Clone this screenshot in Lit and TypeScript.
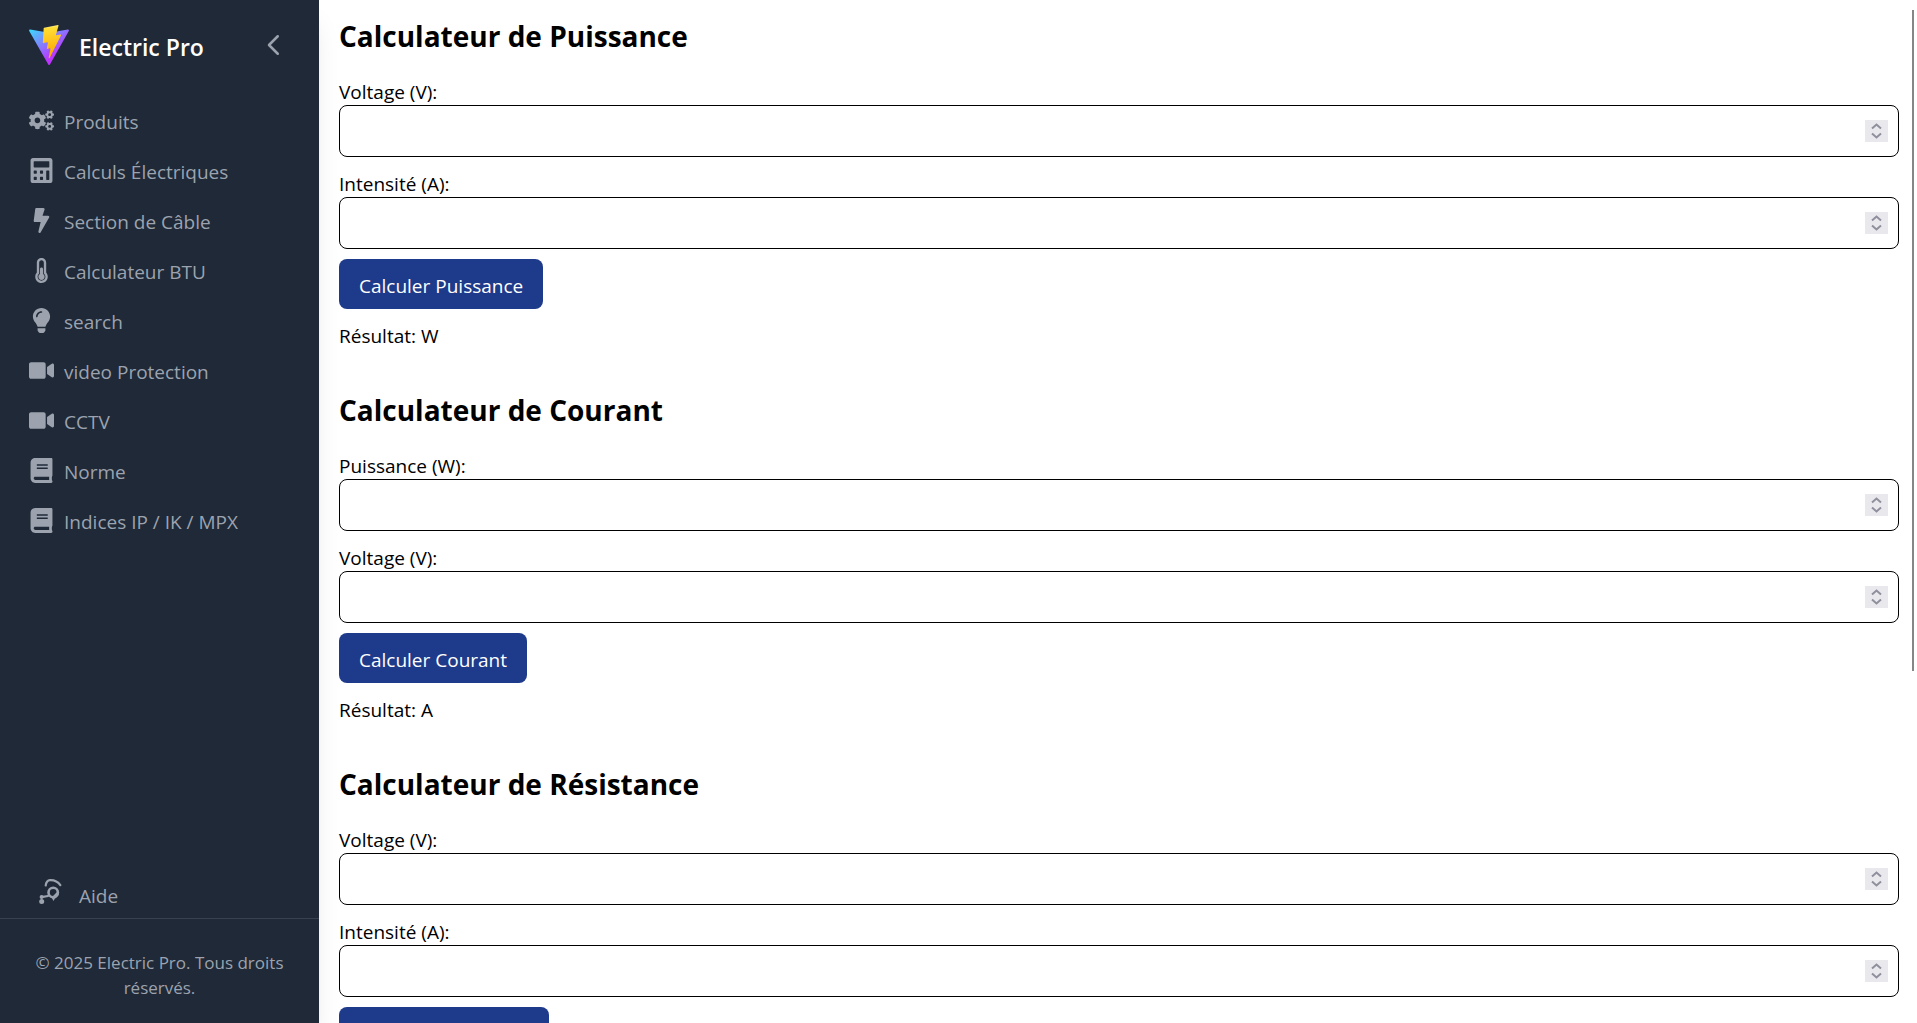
import { LitElement, html, css, svg } from "lit";
import { customElement, property } from "lit/decorators.js";

const COG_SMALL =
  "M512.1 191l-8.2 14.3c-3 5.3-9.4 7.5-15.1 5.4-11.8-4.4-22.6-10.7-32.1-18.6-4.6-3.8-5.8-10.5-2.8-15.7l8.2-14.3c-6.9-8-12.3-17.3-15.9-27.4h-16.5c-6 0-11.2-4.3-12.2-10.3-2-12-2.1-24.6 0-37.1 1-6 6.2-10.4 12.2-10.4h16.5c3.6-10.1 9-19.4 15.9-27.4l-8.2-14.3c-3-5.2-1.9-11.9 2.8-15.7 9.5-7.9 20.4-14.2 32.1-18.6 5.7-2.1 12.1.1 15.1 5.4l8.2 14.3c10.5-1.9 21.2-1.9 31.7 0L552 6.3c3-5.3 9.4-7.5 15.1-5.4 11.8 4.4 22.6 10.7 32.1 18.6 4.6 3.8 5.8 10.5 2.8 15.7l-8.2 14.3c6.9 8 12.3 17.3 15.9 27.4h16.5c6 0 11.2 4.3 12.2 10.3 2 12 2.1 24.6 0 37.1-1 6-6.2 10.4-12.2 10.4h-16.5c-3.6 10.1-9 19.4-15.9 27.4l8.2 14.3c3 5.2 1.9 11.9-2.8 15.7-9.5 7.9-20.4 14.2-32.1 18.6-5.7 2.1-12.1-.1-15.1-5.4l-8.2-14.3c-10.4 1.9-21.2 1.9-31.7 0zm-10.5-58.8c38.5 29.6 82.4-14.3 52.8-52.8-38.5-29.7-82.4 14.3-52.8 52.8z";

const ICONS: Record<string, { box: string; shape: unknown }> = {
  cogs: {
    box: "0 0 640 512",
    shape: svg`<path d=${COG_SMALL}></path><path transform="translate(0 301)" d=${COG_SMALL}></path>
      <path d="M386.3 286.1l33.7 16.8c10.1 5.8 14.5 18.1 10.5 29.1-8.9 24.2-26.4 46.4-42.6 65.8-7.4 8.9-20.2 11.1-30.3 5.3l-29.1-16.8c-16 13.7-34.6 24.6-54.9 31.7v33.6c0 11.6-8.3 21.6-19.7 23.6-24.6 4.2-50.4 4.4-75.9 0-11.5-2-20-11.9-20-23.6V418c-20.3-7.2-38.9-18-54.9-31.7L74 403c-10 5.8-22.9 3.6-30.3-5.3-16.2-19.4-33.3-41.6-42.2-65.7-4-10.9.4-23.2 10.5-29.1l33.3-16.8c-3.9-20.9-3.9-42.4 0-63.4L12 205.8c-10.1-5.8-14.6-18.1-10.5-29 8.9-24.2 26-46.4 42.2-65.8 7.4-8.9 20.2-11.1 30.3-5.3l29.1 16.8c16-13.7 34.6-24.6 54.9-31.7V57.1c0-11.5 8.2-21.5 19.6-23.5 24.6-4.2 50.5-4.4 76-.1 11.5 2 20 11.9 20 23.6v33.6c20.3 7.2 38.9 18 54.9 31.7l29.1-16.8c10-5.8 22.9-3.6 30.3 5.3 16.2 19.4 33.2 41.6 42.1 65.8 4 10.9.1 23.2-10 29.1l-33.7 16.8c3.9 21 3.9 42.5 0 63.5zm-117.6 21.1c59.2-77-28.7-164.9-105.7-105.7-59.2 77 28.7 164.9 105.7 105.7z"></path>`,
  },
  calculator: {
    box: "0 0 448 512",
    shape: svg`<path fill-rule="evenodd" d="M400 0H48C22.4 0 0 22.4 0 48v416c0 25.6 22.4 48 48 48h352c25.6 0 48-22.4 48-48V48c0-25.6-22.4-48-48-48zM76.8 384h38.4a12.8 12.8 0 0 1 12.8 12.8v38.4a12.8 12.8 0 0 1-12.8 12.8H76.8A12.8 12.8 0 0 1 64 435.2v-38.4A12.8 12.8 0 0 1 76.8 384zM76.8 256h38.4a12.8 12.8 0 0 1 12.8 12.8v38.4a12.8 12.8 0 0 1-12.8 12.8H76.8A12.8 12.8 0 0 1 64 307.2v-38.4A12.8 12.8 0 0 1 76.8 256zM204.8 384h38.4a12.8 12.8 0 0 1 12.8 12.8v38.4a12.8 12.8 0 0 1-12.8 12.8h-38.4a12.8 12.8 0 0 1-12.8-12.8v-38.4a12.8 12.8 0 0 1 12.8-12.8zM204.8 256h38.4a12.8 12.8 0 0 1 12.8 12.8v38.4a12.8 12.8 0 0 1-12.8 12.8h-38.4a12.8 12.8 0 0 1-12.8-12.8v-38.4a12.8 12.8 0 0 1 12.8-12.8zM332.8 256h38.4a12.8 12.8 0 0 1 12.8 12.8v166.4a12.8 12.8 0 0 1-12.8 12.8h-38.4a12.8 12.8 0 0 1-12.8-12.8V268.8a12.8 12.8 0 0 1 12.8-12.8zM76.8 64h294.4A12.8 12.8 0 0 1 384 76.8v102.4a12.8 12.8 0 0 1-12.8 12.8H76.8A12.8 12.8 0 0 1 64 179.2V76.8A12.8 12.8 0 0 1 76.8 64z"></path>`,
  },
  bolt: {
    box: "0 0 320 512",
    shape: svg`<path d="M296 160H180.6l42.6-129.8C227.2 15 215.7 0 200 0H56C44 0 33.8 8.9 32.2 20.8l-32 240C-1.7 275.2 9.5 288 24 288h118.7L96.6 482.5c-3.6 15.2 8 29.5 23.3 29.5 8.4 0 16.4-4.4 20.8-12l176-304c9.3-15.9-2.2-36-20.7-36z"></path>`,
  },
  thermometer: {
    box: "0 0 256 512",
    shape: svg`<path d="M192 384c0 35.346-28.654 64-64 64s-64-28.654-64-64c0-23.685 12.876-44.349 32-55.417V224c0-17.673 14.327-32 32-32s32 14.327 32 32v104.583c19.124 11.068 32 31.732 32 55.417zm32-84.653c19.912 22.563 32 52.194 32 84.653 0 70.696-57.303 128-128 128-.299 0-.609-.001-.909-.003C56.789 511.509-.357 453.636.002 383.333.166 351.135 12.243 321.753 32 299.347V96c0-53.019 42.981-96 96-96s96 42.981 96 96v203.347zM208 384c0-34.339-19.37-52.19-32-66.502V96c0-26.467-21.533-48-48-48S80 69.533 80 96v221.498c-12.732 14.428-31.825 32.1-31.999 66.08-.224 43.876 35.563 80.116 79.423 80.42L128 464c44.112 0 80-35.888 80-80z"></path>`,
  },
  bulb: {
    box: "0 0 352 512",
    shape: svg`<path d="M96.06 454.35c.01 6.29 1.87 12.45 5.36 17.69l17.09 25.69a31.99 31.99 0 0 0 26.64 14.28h61.71a31.99 31.99 0 0 0 26.64-14.28l17.09-25.69a31.989 31.989 0 0 0 5.36-17.69l.04-38.35H96.01l.05 38.35zM0 176c0 44.37 16.45 84.85 43.56 115.78 16.52 18.85 42.36 58.23 52.21 91.45.04.26.07.52.11.78h160.24c.04-.26.07-.51.11-.78 9.85-33.22 35.69-72.6 52.21-91.45C335.55 260.85 352 220.37 352 176 352 78.61 272.91-.3 175.45 0 73.44.31 0 82.97 0 176zm176-80c-44.11 0-80 35.89-80 80 0 8.84-7.16 16-16 16s-16-7.16-16-16c0-61.76 50.24-112 112-112 8.84 0 16 7.16 16 16s-7.16 16-16 16z"></path>`,
  },
  video: {
    box: "0 0 576 512",
    shape: svg`<path d="M336.2 64H47.8C21.4 64 0 85.4 0 111.8v288.4C0 426.6 21.4 448 47.8 448h288.4c26.4 0 47.8-21.4 47.8-47.8V111.8c0-26.4-21.4-47.8-47.8-47.8zm189.4 37.7L416 177.3v157.4l109.6 75.5c21.2 14.6 50.4-.3 50.4-25.7V127.4c0-25.4-29.2-40.4-50.4-25.7z"></path>`,
  },
  book: {
    box: "0 0 448 512",
    shape: svg`<path d="M448 360V24c0-13.3-10.7-24-24-24H96C43 0 0 43 0 96v320c0 53 43 96 96 96h328c13.3 0 24-10.7 24-24v-16c0-7.5-3.5-14.3-8.9-18.7-4.2-15.4-4.2-59.3 0-74.7 5.4-4.3 8.9-11.1 8.9-18.6zM128 134c0-3.3 2.7-6 6-6h212c3.3 0 6 2.7 6 6v20c0 3.3-2.7 6-6 6H134c-3.3 0-6-2.7-6-6v-20zm0 64c0-3.3 2.7-6 6-6h212c3.3 0 6 2.7 6 6v20c0 3.3-2.7 6-6 6H134c-3.3 0-6-2.7-6-6v-20zm253.4 250H96c-17.7 0-32-14.3-32-32 0-17.6 14.4-32 32-32h285.4c-1.9 17.1-1.9 46.9 0 64z"></path>`,
  },
  help: {
    box: "0 0 25 25",
    shape: svg`<g fill="none" stroke="currentColor" stroke-linecap="round"><path stroke-width="2.200" d="M6.700 6.500C7.200 3 8.500 1.300 11 1.200C15.500 1 19 2.800 21.300 6.200"></path><circle cx="14.200" cy="13.500" r="4.700" stroke-width="2.600"></circle><path stroke-width="2.200" d="M9 17L2.500 18.200"></path></g><path d="M12.500 18.500l2 3.500 2-3.500z"></path><path d="M14 17l5-5 .5 4-3 3.500z"></path><circle cx="2.600" cy="18" r="2"></circle><circle cx="2.700" cy="22.400" r="2.500"></circle>`,
  },
};

@customElement("app-icon")
class AppIcon extends LitElement {
  @property() name = "cogs";
  static styles = css`
    :host { display: block; width: 25px; height: 25px; flex: none; }
    .glyph { display: block; width: 100%; height: 100%; fill: currentColor; }
  `;
  render() {
    const icon = ICONS[this.name];
    return html`<svg class="glyph" viewBox=${icon.box} aria-hidden="true">${icon.shape}</svg>`;
  }
}

@customElement("app-sidebar")
class AppSidebar extends LitElement {
  static styles = css`
    :host { display: block; }
    .panel {
      box-sizing: border-box; height: 100%; display: flex; flex-direction: column;
      background: #1f2937; color: #9ca3af; font-size: 19px; line-height: 30px;
      box-shadow: 0 20px 25px -5px rgba(0, 0, 0, 0.1), 0 10px 10px -5px rgba(0, 0, 0, 0.04);
    }
    .head { display: flex; align-items: center; gap: 10px; padding: 25px 30px 25px 29px; }
    .logo { width: 40px; height: 40px; flex: none; }
    .brand { padding-top: 5px; color: #fff; font-size: 23px; font-weight: 600; line-height: 35px; }
    .collapse {
      margin-left: auto; padding: 0; border: 0; background: none; color: inherit;
      width: 30px; height: 30px; cursor: pointer;
    }
    .chevron { display: block; width: 30px; height: 30px; }
    .links { display: flex; flex-direction: column; gap: 20px; padding: 15px 29px; flex: 1; }
    .link { display: flex; align-items: center; gap: 10px; color: inherit; text-decoration: none; }
    .text { padding-top: 5px; line-height: 25px; }
    .help { align-items: flex-start; gap: 15px; padding: 0 39px 9px; }
    .foot {
      border-top: 1px solid #374151; padding: 31px 30px 23px; text-align: center;
      font-size: 17px; line-height: 25px;
    }
    .legal { margin: 0; }
  `;

  private entries = [
    ["cogs", "Produits"],
    ["calculator", "Calculs Électriques"],
    ["bolt", "Section de Câble"],
    ["thermometer", "Calculateur BTU"],
    ["bulb", "search"],
    ["video", "video Protection"],
    ["video", "CCTV"],
    ["book", "Norme"],
    ["book", "Indices IP / IK / MPX"],
  ];

  render() {
    return html`
      <aside class="panel">
        <div class="head">
          <svg class="logo" viewBox="0 0 256 257" aria-hidden="true">
            <defs>
              <linearGradient id="shield" x1="-.828%" x2="57.636%" y1="7.652%" y2="78.411%">
                <stop offset="0%" stop-color="#41D1FF"></stop><stop offset="100%" stop-color="#BD34FE"></stop>
              </linearGradient>
              <linearGradient id="flash" x1="43.376%" x2="50.316%" y1="2.242%" y2="89.030%">
                <stop offset="0%" stop-color="#FFEA83"></stop><stop offset="8.333%" stop-color="#FFDD35"></stop><stop offset="100%" stop-color="#FFA800"></stop>
              </linearGradient>
            </defs>
            <path fill="url(#shield)" d="M255.153 37.938L134.897 252.976c-2.483 4.440-8.862 4.466-11.382.048L.875 37.958c-2.746-4.814 1.371-10.646 6.827-9.670l120.385 21.517a6.537 6.537 0 0 0 2.322-.004l117.867-21.483c5.438-.991 9.574 4.796 6.877 9.620Z"></path>
            <path fill="url(#flash)" d="M185.432.063L96.440 17.501a3.268 3.268 0 0 0-2.634 3.014l-5.474 92.456a3.268 3.268 0 0 0 3.997 3.378l24.777-5.718c2.318-.535 4.413 1.507 3.936 3.838l-7.361 36.047c-.495 2.426 1.782 4.500 4.151 3.780l15.304-4.649c2.372-.720 4.652 1.360 4.150 3.788l-11.698 56.621c-.732 3.542 3.979 5.473 5.943 2.437l1.313-2.028l72.516-144.720c1.215-2.423-.880-5.186-3.540-4.672l-25.505 4.922c-2.396.462-4.435-1.770-3.759-4.114l16.646-57.705c.677-2.350-1.370-4.583-3.769-4.113Z"></path>
          </svg>
          <span class="brand">Electric Pro</span>
          <button class="collapse" type="button" aria-label="Réduire le menu">
            <svg class="chevron" viewBox="0 0 24 24" fill="none" stroke="currentColor" stroke-width="2" stroke-linecap="round" stroke-linejoin="round"><path d="M15 19l-7-7 7-7"></path></svg>
          </button>
        </div>
        <nav class="links">
          ${this.entries.map(
            ([icon, label]) => html`<a class="link" href="#"><app-icon name=${icon}></app-icon><span class="text">${label}</span></a>`
          )}
        </nav>
        <a class="link help" href="#"><app-icon name="help"></app-icon><span class="text">Aide</span></a>
        <footer class="foot"><p class="legal">© 2025 Electric Pro. Tous droits réservés.</p></footer>
      </aside>
    `;
  }
}

@customElement("app-calculator")
class AppCalculator extends LitElement {
  @property() name = "";
  @property() unit = "";
  @property({ attribute: false }) fields: string[] = [];

  static styles = css`
    :host { display: block; }
    .title { margin: 0 0 19px; font-size: 28px; font-weight: 700; line-height: 40px; }
    .label { display: block; padding-top: 4px; line-height: 26px; }
    .input {
      display: block; box-sizing: border-box; width: 100%; margin: 0 0 10px; padding: 10px;
      height: 52px; border: 1px solid #000; border-radius: 8px; background: #fff;
      font: inherit; color: inherit;
    }
    .input::-webkit-inner-spin-button {
      -webkit-appearance: none; appearance: none; opacity: 1; width: 23px; height: 22px; margin: 2px 0 0;
      background: #e9e9ed
        url("data:image/svg+xml,%3Csvg xmlns='http://www.w3.org/2000/svg' width='23' height='22' fill='none' stroke='%238f8f9d' stroke-width='2'%3E%3Cpath d='M7 8.500l4.500-4 4.500 4M7 13.500l4.500 4 4.500-4'/%3E%3C/svg%3E")
        center no-repeat;
    }
    .submit {
      display: block; border: 0; border-radius: 8px; padding: 12px 20px 8px; background: #1e3a8a;
      color: #fff; font: inherit; cursor: pointer;
    }
    .result { margin: 12px 0 0; }
  `;

  render() {
    return html`
      <h2 class="title">Calculateur de ${this.name}</h2>
      ${this.fields.map(
        (label, i) => html`<label class="label" for="field-${i}">${label}</label>
          <input class="input" id="field-${i}" type="number" />`
      )}
      <button class="submit" type="button">Calculer ${this.name}</button>
      <p class="result">Résultat: ${this.unit}</p>
    `;
  }
}

@customElement("app-root")
class AppRoot extends LitElement {
  static styles = css`
    :host {
      display: block; position: relative; height: 100vh; overflow: hidden; background: #fff; color: #000;
      font-family: "Segoe UI", "Open Sans", "Noto Sans", sans-serif; font-size: 19px; line-height: 30px;
    }
    .shell { display: grid; grid-template-columns: 319px minmax(0, 1fr); height: 100%; }
    .content {
      display: flex; flex-direction: column; gap: 39px; min-width: 0; overflow-y: auto;
      padding: 16px 18px 20px 20px; scrollbar-width: none;
    }
    .thumb {
      position: absolute; top: 10px; right: 3px; width: 2px; height: calc(66% - 14px);
      background: #868686;
    }
  `;

  render() {
    return html`
      <div class="shell">
        <app-sidebar></app-sidebar>
        <main class="content">
          <app-calculator name="Puissance" unit="W" .fields=${["Voltage (V):", "Intensité (A):"]}></app-calculator>
          <app-calculator name="Courant" unit="A" .fields=${["Puissance (W):", "Voltage (V):"]}></app-calculator>
          <app-calculator name="Résistance" unit="Ω" .fields=${["Voltage (V):", "Intensité (A):"]}></app-calculator>
        </main>
        <div class="thumb"></div>
      </div>
    `;
  }
}
